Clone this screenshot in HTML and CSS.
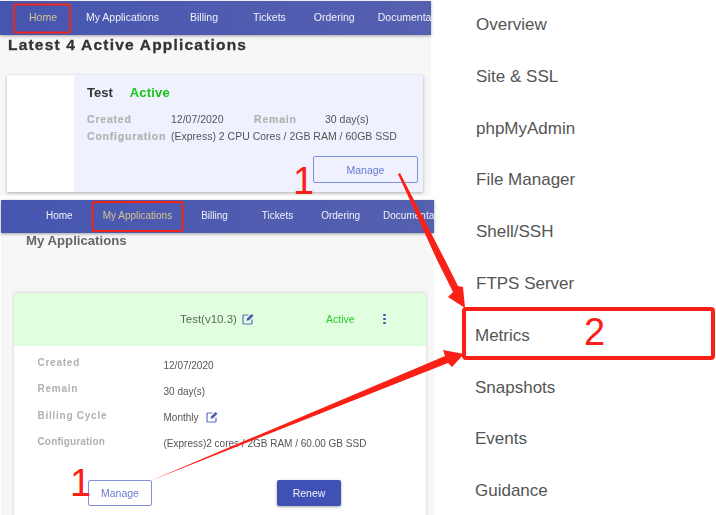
FILE: index.html
```html
<!DOCTYPE html>
<html lang="en">
<head>
<meta charset="utf-8">
<title>Metrics guide</title>
<link rel="stylesheet" href="styles.css">
</head>
<body>
<div class="canvas">
  <div class="left">
    <section class="shot shot-top">
      <nav class="nav nav-a">
        <a class="on">Home</a><a>My Applications</a><a>Billing</a><a>Tickets</a><a>Ordering</a><a>Documentation</a>
      </nav>
      <h1 class="latest">Latest 4 Active Applications</h1>
      <div class="hcard">
        <div class="hcard-thumb"></div>
        <div class="hcard-body">
          <div class="hcard-title"><b>Test</b><b class="green">Active</b></div>
          <div class="hrow"><span class="lab lab-w">Created</span><span class="d1">12/07/2020</span><span class="lab lab-r">Remain</span><span>30 day(s)</span></div>
          <div class="hrow"><span class="lab lab-w">Configuration</span><span>(Express) 2 CPU Cores / 2GB RAM / 60GB SSD</span></div>
          <div class="hfoot"><button class="btn-o btn-wide">Manage</button></div>
        </div>
      </div>
    </section>
    <section class="shot shot-bottom">
      <nav class="nav nav-b">
        <a>Home</a><a class="on">My Applications</a><a>Billing</a><a>Tickets</a><a>Ordering</a><a>Documentation</a>
      </nav>
      <h2 class="mine">My Applications</h2>
      <div class="acard">
        <div class="acard-head">
          <span class="acard-name">Test(v10.3)
            <svg class="edit" viewBox="0 0 12 12"><path d="M6.500 2H2a1 1 0 0 0-1 1v7a1 1 0 0 0 1 1h7a1 1 0 0 0 1-1V6.500" fill="none" stroke="#5a6cc4" stroke-width="1.200"/><path d="M4.500 7.800 5 5.500 9.500 1l2 1.800L7 7.300z" fill="#4a5cb8"/></svg>
          </span>
          <span class="acard-status">Active</span>
          <span class="dots"><i></i><i></i><i></i></span>
        </div>
        <div class="acard-body">
          <div class="arow"><span class="alab">Created</span><span class="aval">12/07/2020</span></div>
          <div class="arow"><span class="alab">Remain</span><span class="aval">30 day(s)</span></div>
          <div class="arow"><span class="alab">Billing Cycle</span><span class="aval">Monthly
            <svg class="edit edit-m" viewBox="0 0 12 12"><path d="M6.500 2H2a1 1 0 0 0-1 1v7a1 1 0 0 0 1 1h7a1 1 0 0 0 1-1V6.500" fill="none" stroke="#5a6cc4" stroke-width="1.200"/><path d="M4.500 7.800 5 5.500 9.500 1l2 1.800L7 7.300z" fill="#4a5cb8"/></svg>
          </span></div>
          <div class="arow"><span class="alab alab-thin">Configuration</span><span class="aval">(Express)2 cores / 2GB RAM / 60.00 GB SSD</span></div>
          <div class="acts"><button class="btn-o btn-small">Manage</button><button class="btn-f">Renew</button></div>
        </div>
      </div>
    </section>
  </div>
  <ul class="menu">
    <li>Overview</li><li>Site &amp; SSL</li><li>phpMyAdmin</li><li>File Manager</li><li>Shell/SSH</li><li>FTPS Server</li><li>Metrics</li><li>Snapshots</li><li>Events</li><li>Guidance</li>
  </ul>
  <svg class="marks" viewBox="0 0 716 515" aria-hidden="true">
    <rect x="14" y="4.500" width="56" height="28" rx="2" class="box"/>
    <rect x="92.500" y="202" width="90" height="29" rx="2" class="box"/>
    <rect x="464" y="309" width="249" height="49" rx="2" class="box box-thick"/>
    <path class="arrow" d="M398 174 400 173 445 260 458 286 463 287 465 308 448 297 453 292 437 260z"/>
    <path class="arrow" d="M150 481 445 356 443 350 464 354 452 367 448 363z"/>
  </svg>
  <span class="num num-a">1</span>
  <span class="num num-b">1</span>
  <span class="num num-c">2</span>
</div>
</body>
</html>
```
FILE: styles.css
```css
* { box-sizing: border-box; }
html, body { margin: 0; padding: 0; background: #fff; }
body { font-family: "Liberation Sans", Arial, sans-serif; color: #555; overflow: hidden; }
.canvas { position: relative; width: 716px; height: 515px; display: flex; overflow: hidden; }
.left { width: 434px; flex: none; padding-top: 1px; filter: blur(0.35px); }

.shot { background: #f7f7f7; }
.shot-top { width: 431px; height: 195px; }
.shot-bottom { width: 433px; height: 315px; margin: 4px 0 0 1px; }

.nav { display: flex; align-items: center; height: 34px; padding-bottom: 2px; background: linear-gradient(90deg, #4656b0, #5560b0); box-shadow: 0 1px 3px rgba(0,0,0,.35); font-size: 10.500px; color: #f1f1f8; white-space: nowrap; overflow: hidden; }
.nav a { flex: none; }
.nav .on { color: #d6c48e; }
.nav-a { padding-left: 29px; }
.nav-a a:nth-child(2) { margin-left: 29px; }
.nav-a a:nth-child(3) { margin-left: 31px; }
.nav-a a:nth-child(4) { margin-left: 35px; }
.nav-a a:nth-child(5) { margin-left: 28px; }
.nav-a a:nth-child(6) { margin-left: 23px; }
.nav-b { height: 33px; font-size: 10px; padding-left: 45px; }
.nav-b a:nth-child(2) { margin-left: 30px; }
.nav-b a:nth-child(3) { margin-left: 29px; }
.nav-b a:nth-child(4) { margin-left: 34px; }
.nav-b a:nth-child(5) { margin-left: 28px; }
.nav-b a:nth-child(6) { margin-left: 23px; }

.latest { margin: 1px 0 0 8px; font-size: 15.500px; line-height: 18px; letter-spacing: 1.200px; color: #333; font-weight: bold; -webkit-text-stroke: .3px #333; white-space: nowrap; }
.hcard { display: flex; width: 416px; height: 117px; margin: 21px 0 0 7px; box-shadow: 0 1px 3px rgba(0,0,0,.3); background: #eff1fe; }
.hcard-thumb { width: 67px; background: #fff; }
.hcard-body { flex: 1; padding: 10px 5px 0 13px; font-size: 10.500px; color: #555; }
.hcard-title { display: flex; gap: 17px; font-size: 13px; line-height: 15px; color: #333; margin-bottom: 11px; }
.hcard-title .green { color: #16c516; letter-spacing: .2px; }
.hrow { display: flex; line-height: 17px; white-space: nowrap; }
.lab { font-weight: bold; color: #b3b3b3; letter-spacing: .8px; -webkit-text-stroke: .2px #b3b3b3; }
.lab-w { width: 84px; flex: none; }
.d1 { width: 83px; flex: none; }
.lab-r { width: 71px; flex: none; }
.hfoot { display: flex; justify-content: flex-end; margin-top: 11px; }
button { font-family: inherit; font-size: 10.500px; border-radius: 2px; cursor: pointer; padding: 0; }
.btn-o { background: transparent; border: 1px solid #8290dc; color: #6a7bd0; }
.btn-wide { width: 105px; height: 27px; }

.mine { margin: 0 0 0 25px; font-size: 13.200px; line-height: 16px; color: #666; font-weight: bold; }
.acard { width: 412px; margin: 44px 0 0 13px; background: #fff; box-shadow: 0 0 3px rgba(0,0,0,.2); height: 230px; }
.acard-head { display: flex; align-items: center; height: 53px; padding-bottom: 1px; background: #dfffdf; font-size: 10.500px; }
.acard-name { margin-left: 166px; width: 146px; color: #5a6a5a; font-size: 11.500px; white-space: nowrap; }
.acard-status { width: 57px; color: #2ecb2e; }
.dots { display: flex; flex-direction: column; gap: 1.500px; }
.dots i { display: block; width: 2.500px; height: 2.500px; background: #3f51b5; border-radius: 50%; }
.edit { width: 12px; height: 12px; vertical-align: -2px; margin-left: 2px; }
.edit-m { margin-left: 5px; }
.acard-body { padding-top: 10px; }
.arow { display: flex; height: 26.300px; align-items: flex-start; font-size: 10px; white-space: nowrap; }
.alab { width: 149.500px; padding-left: 23.500px; font-weight: bold; color: #b0b0b0; letter-spacing: .75px; line-height: 14px; }
.alab-thin { letter-spacing: .15px; }
.aval { color: #555; line-height: 14px; padding-top: 2.500px; font-size: 10px; }
.acts { display: flex; align-items: flex-start; margin-top: 19px; }
.btn-small { width: 64px; height: 26px; margin-left: 74px; }
.btn-f { width: 64px; height: 26px; margin-left: 125px; background: #3f51b5; color: #f2f2fa; border: 0; box-shadow: 0 1px 3px rgba(0,0,0,.35); }

.menu { list-style: none; margin: 0; padding: 0 0 0 42px; flex: 1; }
.menu li { height: 51.800px; line-height: 50px; font-size: 17px; color: #555; white-space: nowrap; }
.menu li:nth-child(n+7) { margin-left: -1px; }

.marks { position: absolute; inset: 0; width: 716px; height: 515px; pointer-events: none; }
.box { fill: none; stroke: #f0261c; stroke-width: 2; }
.box-thick { stroke: #fb2015; stroke-width: 4; }
.arrow { fill: #fb2015; }
.num { position: absolute; color: #fb2015; font-size: 38px; line-height: 42px; }
.num-a { left: 293px; top: 160px; }
.num-b { left: 70px; top: 462px; }
.num-c { left: 584px; top: 311px; }
```
